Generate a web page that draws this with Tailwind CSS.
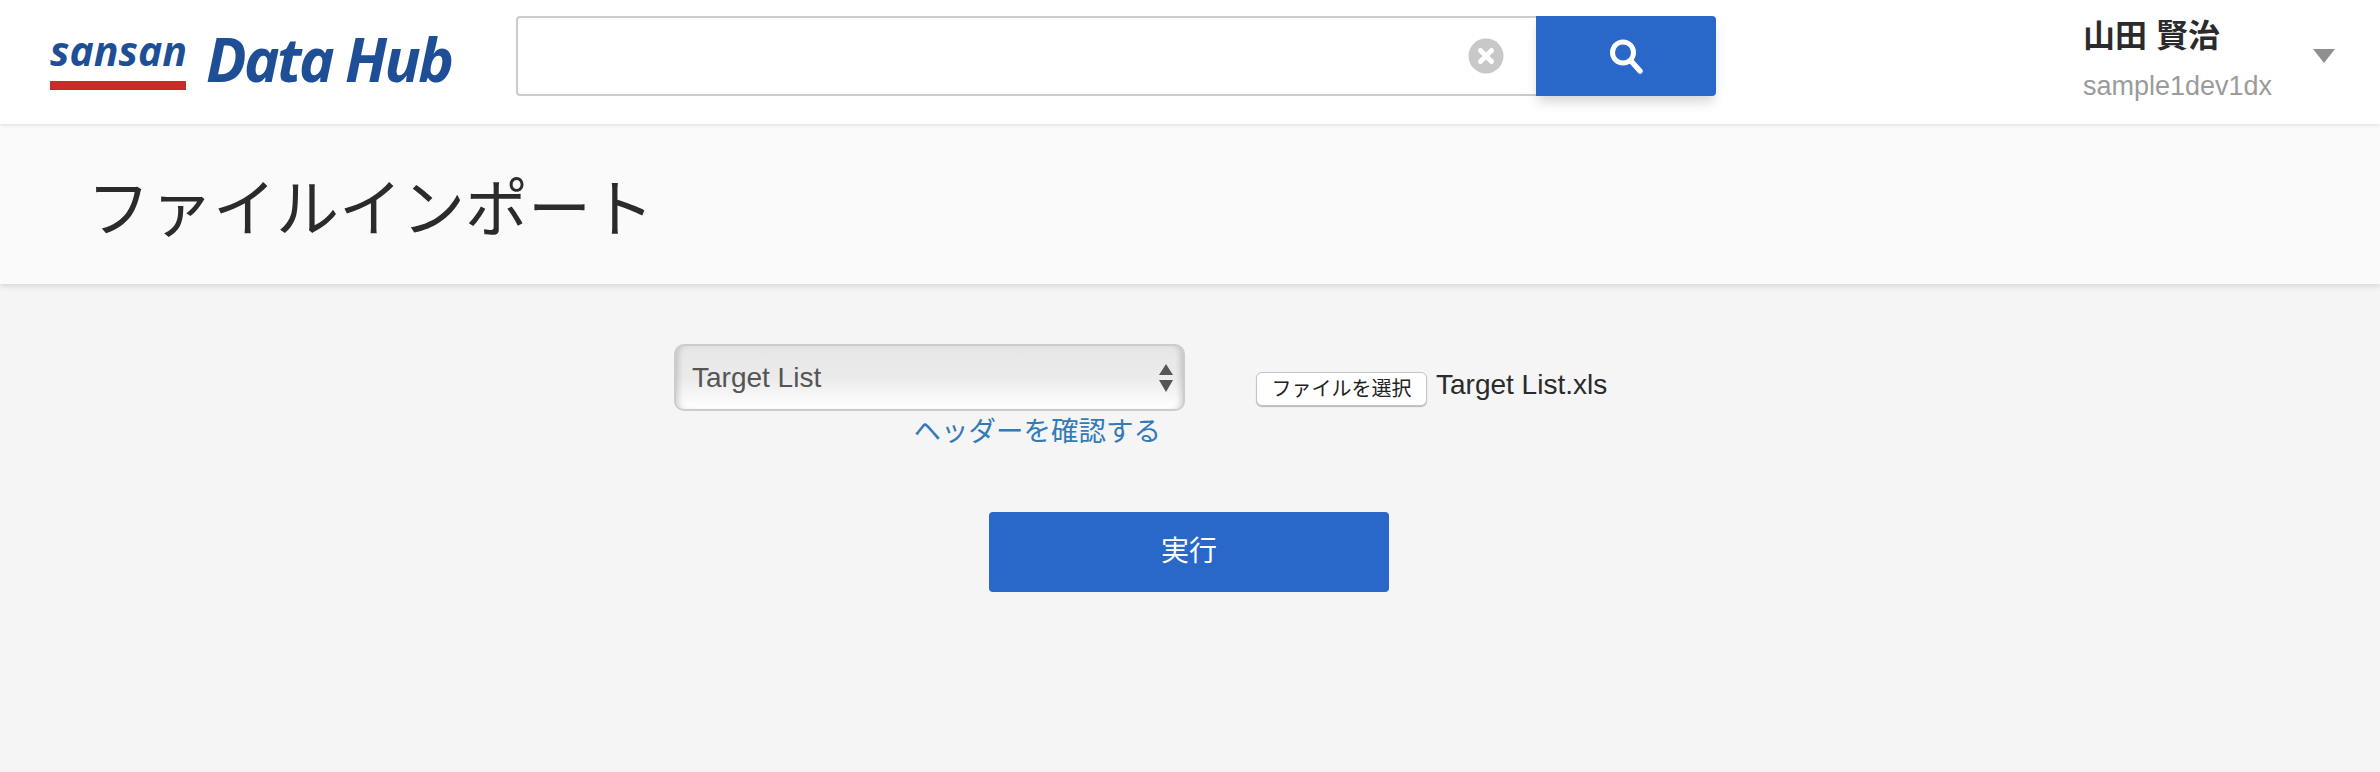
<!DOCTYPE html>
<html lang="ja">
<head>
<meta charset="utf-8">
<title>ファイルインポート</title>
<script src="https://cdn.jsdelivr.net/npm/@tailwindcss/browser@4"></script>
</head>
<body class="bg-[#f5f5f5] h-[772px] overflow-hidden font-['Liberation_Sans','Noto_Sans_CJK_JP',sans-serif] text-[#2b2b2b]">
<header class="relative z-20 h-[124px] bg-white shadow-[0_1px_4px_rgba(0,0,0,0.12)] flex items-start">
  <div class="w-[516px] pl-[50px] pt-[28px] flex items-start shrink-0">
    <div class="w-[136px] flex flex-col">
      <span class="font-['Open_Sans',sans-serif] italic font-bold text-[#1e4f96] text-[41px] leading-[44px] tracking-[0px] h-[53px]">sansan</span>
      <span class="block h-[9px] bg-[#c82c28]"></span>
    </div>
    <span class="ml-[20px] mt-[-2px] font-['Open_Sans',sans-serif] italic font-bold text-[#1e4f96] text-[60px] leading-[66px] tracking-[-2.6px] whitespace-nowrap">Data Hub</span>
  </div>
  <div class="flex w-[1200px] h-[80px] mt-[16px] rounded-[4px]">
    <div class="flex-1 border-2 border-r-0 border-[#cccccc] rounded-l-[4px] bg-white flex items-center justify-end pr-[32px]">
      <svg width="36" height="36" viewBox="0 0 36 36"><circle cx="18" cy="18" r="17.5" fill="#c8c8c8"/><path d="M12.5 12.5l11 11M23.5 12.5l-11 11" stroke="#fff" stroke-width="5" stroke-linecap="round"/></svg>
    </div>
    <button class="w-[180px] bg-[#2968c8] rounded-r-[4px] flex items-center justify-center shadow-[0_8px_12px_-2px_rgba(0,0,0,0.16)]">
      <svg width="36" height="36" viewBox="0 0 36 36" fill="none" stroke="#fff"><circle cx="15" cy="14.5" r="10.5" stroke-width="5"/><path d="M23 23l9 10" stroke-width="5.5" stroke-linecap="round"/></svg>
    </button>
  </div>
  <div class="ml-[367px] w-[230px] shrink-0 pt-[16px]">
    <div class="text-[32px] leading-[40px] font-bold">山田 賢治</div>
    <div class="text-[27px] leading-[32px] text-[#9b9b9b] mt-[14px]">sample1dev1dx</div>
  </div>
  <svg class="mt-[49px]" width="22" height="14" viewBox="0 0 22 14"><path d="M0 0h22L11 14z" fill="#8f8f8f"/></svg>
</header>
<section class="relative z-10 h-[160px] bg-[#fafafa] shadow-[0_2px_6px_rgba(0,0,0,0.14)] flex items-center pl-[87px]">
  <h1 class="text-[63px] leading-none font-normal mt-[10px]">ファイルインポート</h1>
</section>
<main class="flex flex-col">
  <div class="flex items-start pl-[674px] pt-[60px]">
    <div class="w-[511px] flex flex-col">
      <div class="relative h-[67px] rounded-[10px] border-2 border-[#cccccc] bg-gradient-to-b from-[#e6e6e6] via-[#ebebeb] to-white shadow-[inset_6px_0_6px_-4px_rgba(0,0,0,0.18),inset_-6px_0_6px_-4px_rgba(0,0,0,0.18)] flex items-center justify-between pl-[16px] pr-[10px]">
        <span class="text-[28px] text-[#555555] leading-none">Target List</span>
        <svg width="14" height="28" viewBox="0 0 14 28"><path d="M7 0l7 11H0zM0 16h14L7 28z" fill="#555"/></svg>
      </div>
      <a class="self-end mr-[24px] mt-[2px] text-[27.5px] leading-[38px] text-[#337ab7] whitespace-nowrap">ヘッダーを確認する</a>
    </div>
    <div class="ml-[71px] mt-[28px] w-[171px] h-[34px] bg-white rounded-[6px] border border-[#c4c4c4] shadow-[0_1px_1px_rgba(0,0,0,0.25)] flex items-center justify-center text-[20px] text-[#222222] whitespace-nowrap">ファイルを選択</div>
    <span class="ml-[9px] mt-[23px] text-[28px] leading-[36px] whitespace-nowrap">Target List.xls</span>
  </div>
  <button class="self-center mt-[61px] ml-[-2px] w-[400px] h-[80px] bg-[#2968c8] rounded-[4px] text-white text-[28px]">実行</button>
</main>
</body>
</html>
